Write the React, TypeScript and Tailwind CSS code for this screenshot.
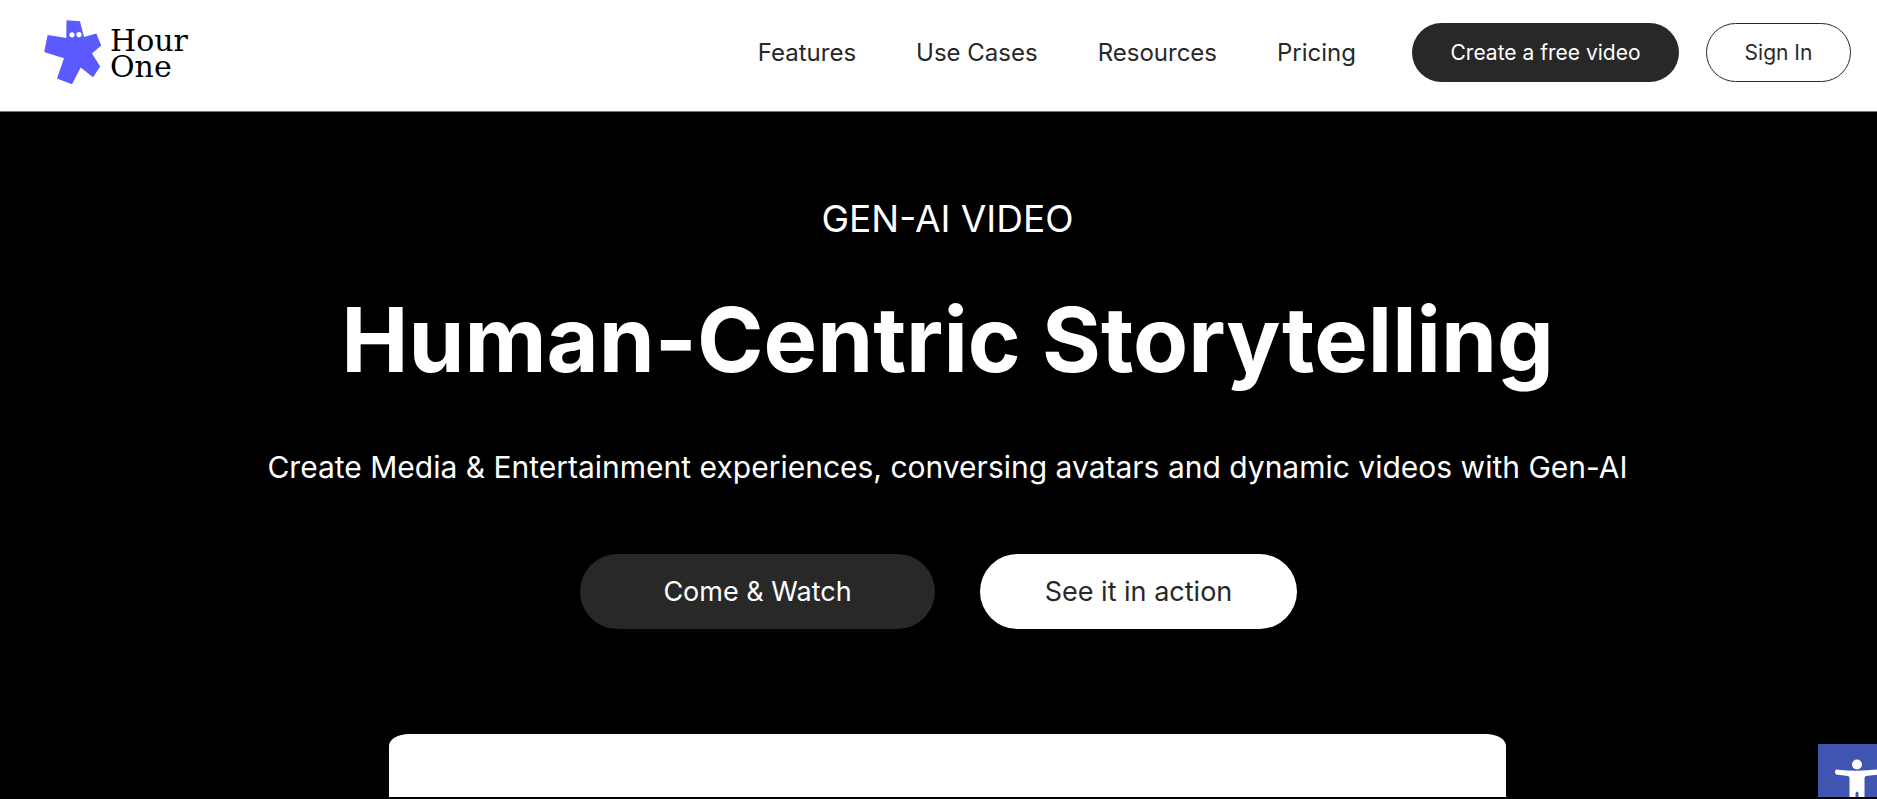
const NAV_LINKS = ["Features", "Use Cases", "Resources", "Pricing"] as const;

function Logo() {
  return (
    <a href="#" className="flex items-start gap-2 text-black">
      <svg viewBox="44 20 58 65" className="h-[65px] w-[58px]" aria-hidden="true">
        <path
          d="M66.5 20.2 80 21.3 84 37 96.3 33.6 101.2 45.5 92 53.5 100.2 66.5 93 77.3 80.7 67.5 72 84.3 57 78.5 64 58.3 44.2 52 47.6 35 66.3 38Z"
          fill="#5a5aff"
        />
        <circle cx="72" cy="34.8" r="2.6" fill="#fff" />
        <circle cx="79" cy="34.6" r="2.6" fill="#fff" />
      </svg>
      <span className="pt-2 font-['DejaVu_Serif',serif] text-[30px] leading-[26px]">
        Hour
        <br />
        One
      </span>
    </a>
  );
}

function Header() {
  return (
    <header className="flex h-28 items-start justify-between border-b border-[#777777] bg-white pr-[26px] pl-11 text-[#282828]">
      <div className="pt-5">
        <Logo />
      </div>
      <div className="flex items-center pt-[23px]">
        <nav className="mr-14 flex gap-[60px] text-2xl">
          {NAV_LINKS.map((link) => (
            <a key={link} href="#">
              {link}
            </a>
          ))}
        </nav>
        <button className="mr-[27px] h-[59px] w-[267px] rounded-full bg-[#282828] text-[21px] text-white">
          Create a free video
        </button>
        <button className="h-[59px] w-[145px] rounded-full border border-[#282828] text-[21px]">
          Sign In
        </button>
      </div>
    </header>
  );
}

function Hero() {
  return (
    <main className="flex flex-col items-center pt-[83px]">
      <div className="flex w-full flex-col items-center pl-[18px] text-center">
        <p className="text-[37px] leading-[48px]">GEN-AI VIDEO</p>
        <h1 className="mt-[42px] text-[90px] leading-[110px] font-bold">Human-Centric Storytelling</h1>
        <p className="mt-[52px] text-[30px] leading-[40px]">
          Create Media &amp; Entertainment experiences, conversing avatars and dynamic videos with Gen-AI
        </p>
      </div>
      <div className="mt-[67px] flex gap-[45px] text-[27px]">
        <button className="h-[75px] w-[355px] rounded-full bg-[#282828] pt-px">Come &amp; Watch</button>
        <button className="h-[75px] w-[317px] rounded-full bg-white pt-px text-[#282828]">See it in action</button>
      </div>
      <div className="mt-[105px] w-full pl-[18px]">
        <div className="mx-auto h-[63px] max-w-[1117px] rounded-t-[20px_12px] bg-white" />
      </div>
    </main>
  );
}

export default function App() {
  return (
    <div className="relative min-h-screen overflow-hidden bg-black font-['Inter',sans-serif] text-white">
      <Header />
      <Hero />
      <button
        aria-label="Accessibility"
        className="absolute right-0 bottom-[2px] h-[53px] w-[59px] overflow-hidden bg-[#4054b2]"
      >
        <svg viewBox="0 0 59 53" className="h-full w-full" fill="#fff" aria-hidden="true">
          <circle cx="39" cy="20.5" r="5" />
          <path d="M18 25.5Q39 28 60 25.5V30.5L48 32Q46.5 32.5 46.5 34V53H40.5V49Q39 46 37.5 49V53H31.5V34Q31.5 32.5 30 32L18 30.5Q16 28 18 25.5Z" />
        </svg>
      </button>
    </div>
  );
}
